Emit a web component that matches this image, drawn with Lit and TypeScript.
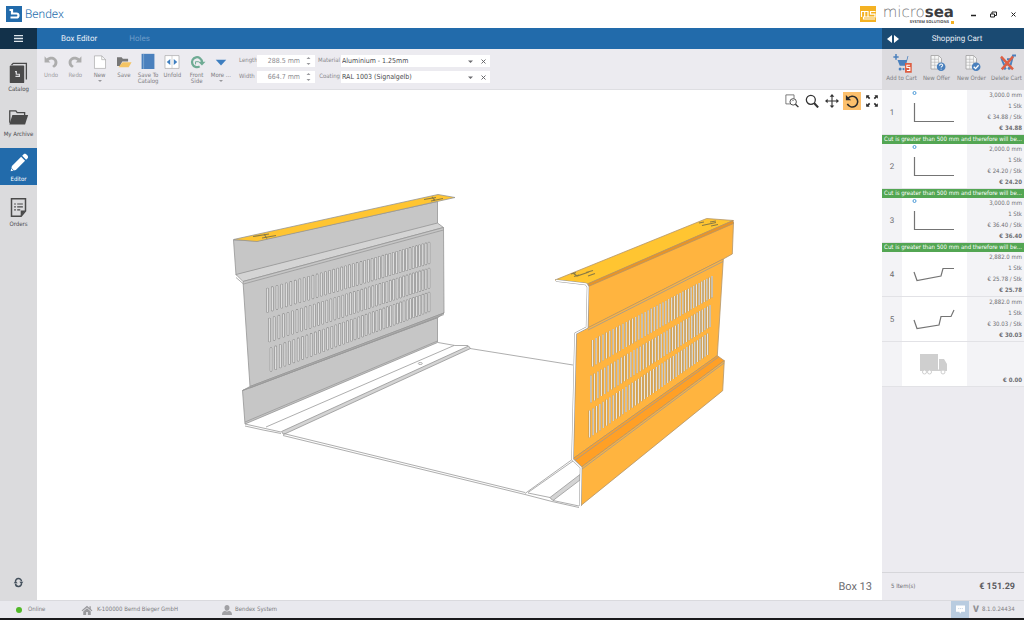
import { LitElement, html, svg, css, nothing } from "lit";
import { customElement, property, state } from "lit/decorators.js";
import { classMap } from "lit/directives/class-map.js";

const icons: Record<string, unknown> = {
  catalog: svg`<path d="M4 3.500 6 1.500H21V20" fill="none" stroke="#4a4a4a" stroke-width="1.500"/><rect x="2" y="4" width="16.500" height="20" rx="1" fill="#4a4a4a"/><path d="M8 11h1.500v3h3.500v2.500H8.500" fill="none" stroke="#dcdcde" stroke-width="1.400"/>`,
  archive: svg`<path d="M2 18V4.500h7l1.500 2H19V9" fill="none" stroke="#4a4a4a" stroke-width="1.5"/><path d="M5 9h18l-3.500 11H1.500z" fill="#4a4a4a"/>`,
  editor: svg`<path d="M3 22l1.500-6L15 5.500l4.500 4.500L9 20.500zM16.200 4.300l2-2c2-1.300 5.800 2.300 4.500 4.500l-2 2z" fill="#fff"/><path d="M3.800 18.500l2.700 2.700" stroke="#226bab" stroke-width="1"/>`,
  orders: svg`<path d="M4 2h16v14l-5 6H4z" fill="none" stroke="#4a4a4a" stroke-width="1.700"/><path d="M20 15.500h-5.500V22z" fill="#4a4a4a"/><path d="M7 8h2M10.500 8H17M7 11.300h2M10.500 11.300H17M7 14.600h2M10.500 14.600H14" stroke="#4a4a4a" stroke-width="1.400"/>`,
  undo: svg`<path d="M1 2v11h10L7.800 9.800C12 6 18 8 18 12.500c0 3-1.500 5-4 6.500l3 3c4-2 6.500-5.500 6-10C22 3 11 0 4.500 6z" fill="#adadad"/>`,
  redo: svg`<path d="M23 2v11H13l3.200-3.200C12 6 6 8 6 12.500c0 3 1.500 5 4 6.500l-3 3C3 20 .5 16.500 1 12 2 3 13 0 19.500 6z" fill="#adadad"/>`,
  fresh: svg`<path d="M2.500 1.500h12.500l6.500 6.500v15H2.500z" fill="#fff" stroke="#9a9a9a"/><path d="M15 1.500v6.500h6.500" fill="none" stroke="#9a9a9a"/>`,
  save: svg`<path d="M0 4h8l2 2.500h9V11H9l-4 8H0z" fill="#777"/><path d="M9.500 12.500H25L20 21H2.500z" fill="#f4c464"/>`,
  book: svg`<path d="M1 -2h22v26H1z" fill="#4a80bd"/><path d="M4.500-2v26" stroke="#9dbfe0" stroke-width="1"/>`,
  unfold: svg`<path d="M0 1h24v22H0z" fill="#fff" stroke="#9a9a9a"/><path d="M12 1v22" stroke="#b8b8b8"/><path d="M9 7v10l-6-5zM15 7v10l6-5z" fill="#3f7fc0"/>`,
  front: svg`<path d="M20.500 12A8.500 8.500 0 1 0 16.500 19.500" fill="none" stroke="#6fab94" stroke-width="3.800"/><path d="M14 11.500H26.500L20.500 18z" fill="#6fab94"/><path d="M15 11.500H9.500v4.500" fill="none" stroke="#6fab94" stroke-width="1.700"/>`,
  more: svg`<path d="M3 8h18l-9 10z" fill="#3f7fc0"/>`,
  cart: svg`<path d="M24 2.500h-3.500L17 15.500H9L6 8h12l1.500-5.500z" fill="#4a80bd"/><path d="M4 0v7.500M.5 4h7" stroke="#4a80bd" stroke-width="2"/><circle cx="9.500" cy="20" r="2" fill="#4a80bd"/><circle cx="14" cy="20" r="1.500" fill="#4a80bd"/><path d="M16 12h9v13h-9z" fill="#de5f43"/><path d="M22.500 15h-4v3h4v4h-4" fill="none" stroke="#fff" stroke-width="1.400"/>`,
  offer: svg`<path d="M4 2h10l4 4v14H4z" fill="#f6f6f6" stroke="#9b9b9b"/><path d="M4 7h10M4 11h14M4 15h14M9 2v18M14 2v18" stroke="#b4b4b4" stroke-width=".8"/><circle cx="17.500" cy="17" r="5.800" fill="#4a80bd"/><path d="M15.500 15.500c0-3 4.500-2.500 4 0-.3 1-2 1.200-2 2.500M17.500 19.500v1.300" fill="none" stroke="#fff" stroke-width="1.400"/>`,
  order: svg`<path d="M4 2h10l4 4v14H4z" fill="#f6f6f6" stroke="#9b9b9b"/><path d="M4 7h10M4 11h14M4 15h14M9 2v18M14 2v18" stroke="#b4b4b4" stroke-width=".8"/><circle cx="17.500" cy="17" r="5.800" fill="#4a80bd"/><path d="M14.300 17l2.500 2.500 4-4.500" fill="none" stroke="#fff" stroke-width="1.800"/>`,
  remove: svg`<path d="M24 2h-4l-3 12H8L5 7h3M12 7h5" fill="none" stroke="#4a80bd" stroke-width="2.500"/><circle cx="9" cy="19" r="2" fill="#4a80bd"/><circle cx="15" cy="19" r="2" fill="#4a80bd"/><path d="M4 3.500l16 17M20 3.500L5 20.500" stroke="#de5f43" stroke-width="3.200"/>`,
  zoomArea: svg`<path d="M9 17H1.500V1.500h14V8" fill="none" stroke="#555" stroke-width="1.300"/><circle cx="14" cy="13.500" r="5.500" fill="#fff" stroke="#444" stroke-width="1.600"/><path d="M18 17.500l5 5" stroke="#333" stroke-width="2.400"/><path d="M11.500 12.500c.8-1.500 2.500-2 4-1" fill="none" stroke="#555"/>`,
  zoom: svg`<circle cx="10" cy="10" r="7.700" fill="none" stroke="#333" stroke-width="2.200"/><path d="M15.500 15.500l7 7.500" stroke="#333" stroke-width="3.600"/>`,
  pan: svg`<path d="M12 3v18M3 12h18" stroke="#333" stroke-width="1.900"/><path d="M12 0l4 4.500H8zM12 24l4-4.500H8zM0 12l4.500-4v8zM24 12l-4.500-4v8z" fill="#333"/>`,
  rotate: svg`<path d="M5 7.500A9.300 9.300 0 1 1 4 17" fill="none" stroke="#2b2b2b" stroke-width="2.600"/><path d="M1.500 1.500v9h9z" fill="#2b2b2b"/>`,
  fit: svg`<path d="M2 2h6L6.200 4 9 7 7 9 4 6 2 8zM22 2v6L20 6 17 9l-2-2 2.800-3L16 2zM2 22v-6l2 2L7 15l2 2-2.800 3L8 22zM22 22h-6l1.800-2L15 17l2-2 3 3 2-2z" fill="#2b2b2b"/>`,
  sync: svg`<path d="M4 10a8 8 0 0 1 16-1M20 14a8 8 0 0 1-16 1" fill="none" stroke="#44505c" stroke-width="4"/><path d="M-1 14l5-6 6 6zM25 10l-5 6-6-6z" fill="#44505c"/>`,
  home: svg`<path d="M12 2L-1 13l2 2L12 6 23 15l2-2-4-3.500V3h-3v4zM12 8L3 15.500V24h7v-7h4v7h7v-8.500z" fill="#98989c"/>`,
  user: svg`<path d="M12 0c3.500 0 6 2.500 6 6.500S15.500 14 12 14 6 11 6 6.500 8.500 0 12 0zM0 24c0-7 3-9 7-10 3 2 7 2 10 0 4 1 7 3 7 10z" fill="#a0a0a4"/>`,
  chat: svg`<path d="M0 1h24v17H14l-3 5-2-5H0z" fill="#fff"/><path d="M5.500 9.500h3M10.500 9.500h3M15.500 9.500h3" stroke="#b9cce0" stroke-width="2"/>`,
};

const glyph = (name: string, cls = "icon") =>
  html`<svg class=${cls} viewBox="0 0 24 24" aria-hidden="true">${icons[name]}</svg>`;

type Pt = [number, number];
type SlotRow = { left: [number, number, number]; right: [number, number, number] };

/* Ventilation slots, foreshortened toward the far end of the side panel. */
function slotPath(rows: SlotRow[], count: number, depth: number): string {
  let d = "";
  for (const { left, right } of rows) {
    for (let i = 0; i < count; i++) {
      const t = i / (count - 1);
      const s = t / (t + (1 - t) * depth);
      const at = (k: number) => (left[k] + (right[k] - left[k]) * s).toFixed(1);
      d += `M${at(0)} ${at(1)}V${at(2)}`;
    }
  }
  return d;
}
const poly = (pts: Pt[], fill: string) =>
  svg`<polygon points=${pts.map((p) => p.join(",")).join(" ")} fill=${fill}></polygon>`;

@customElement("box-model")
class BoxModel extends LitElement {
  static styles = css`
    :host { display: block; }
    svg { display: block; width: 100%; height: 100%; }
    .faces polygon { stroke: #969696; stroke-width: 0.8; stroke-linejoin: round; }
    .warm polygon { stroke: #b3946a; }
    .line { fill: none; stroke: #999; stroke-width: 0.8; }
    .edge { fill: none; stroke: #999; stroke-width: 2.4; stroke-linejoin: round; }
    .edge-in { fill: none; stroke: #fff; stroke-width: 1.4; stroke-linejoin: round; }
    .slot-rim { fill: none; stroke: #8e8e8e; stroke-linecap: round; stroke-width: 2.6; }
    .slot-gap { fill: none; stroke: #dedede; stroke-linecap: round; stroke-width: 1.4; }
    .slot-dark { fill: none; stroke: #97835f; stroke-width: 1.9; }
    .slot-light { fill: none; stroke: #e9e6e0; stroke-width: 1.2; }
    .mark { fill: none; stroke: #8b7b45; stroke-width: 1.2; }
  `;
  render() {
    const near = slotPath([
      { left: [592.6, 340, 366.6], right: [712, 276, 297.5] },
      { left: [591, 375.6, 402.6], right: [710, 305, 327] },
      { left: [589.6, 410.6, 437.6], right: [707.6, 333.5, 355] },
    ], 41, 0.85);
    const far = slotPath([
      { left: [267.5, 289, 311.5], right: [429, 243, 263] },
      { left: [269.5, 319, 341], right: [429, 269, 287.5] },
      { left: [271, 348.5, 370.5], right: [429, 293, 311] },
    ], 43, 0.8);
    const rim = "M556 280.500 586 284 588 287 587 327.500 575.500 333.500 572.500 459.500 581 467.500 580.300 506";
    return html`<svg viewBox="37 90 845 510" role="img" aria-label="Box 13">
      <path class="line" d="M470 348.500 573 365"/>
      <g class="faces">
        ${poly([[233.5, 240], [257, 241], [437.5, 201.5], [437.5, 224], [236, 275]], "#c6c6c6")}
        ${poly([[233.5, 239.5], [438, 194.5], [455, 197.5], [257, 241.5]], "#ffc531")}
        ${poly([[236, 274.5], [437.500, 223], [443.5, 227.5], [243, 281.5]], "#d4d4d4")}
        ${poly([[242.5, 390.5], [437.5, 317.5], [437.5, 342.5], [245, 424]], "#c6c6c6")}
        ${poly([[243, 281.5], [443.5, 227.5], [444, 313], [250, 386.5]], "#c6c6c6")}
        ${poly([[242.5, 390.5], [250, 386.5], [444, 313], [438, 317.5]], "#b4b4b4")}
        ${poly([[281.5, 431.5], [468.5, 346], [470.5, 348.5], [283.5, 434.5]], "#d4d4d4")}
      </g>
      <path class="line" d="M236 277.500 243.500 284 443.500 230M245 422 437.500 341M250 388 444 314.500"/>
      <path class="line" d="M438 342.500 455 345.500 468 345.500M266 427 454 345.500"/>
      <path class="line" d="M245 424 263 428 281 432M245 426 263 430 281 433.500M283.500 433.500 525 492.500M283 435.500 525 494.500 552 501.500 579 507.500"/>
      <ellipse class="line" cx="420.300" cy="363.500" rx="2" ry="1"/>
      <path class="slot-rim" d=${far}/><path class="slot-gap" d=${far}/>
      <path class="mark" d="M253 236.500 269 234M262 238 276 235.500M264 234 267 238.500M424 199.500 436 197.500M431 201 443 198.500M432 197 435 200.500"/>
      <path class="line" d="M525 493.500 571.500 460M528 492.500 573 461M528 493 550 497.500 553 500.500 579 506"/>
      ${svg`<polygon points="550,497.500 580,474.500 580,480 553,500.500" fill="#d4d4d4" stroke="#999" stroke-width=".8"></polygon>`}
      <g class="faces warm">
        ${poly([[588.3, 285], [733.5, 222.5], [732.3, 254], [723.3, 259], [588.3, 328]], "#ffb43f")}
        ${poly([[555, 280], [706.7, 218.5], [733.5, 220.5], [588.3, 284]], "#ffc531")}
        ${poly([[588.3, 283.5], [733, 220.5], [733.500, 223.5], [588.3, 286.5]], "#e89428")}
        ${poly([[576.5, 333.5], [588.3, 327.5], [723.3, 259], [717.3, 355.7], [573.3, 458.5]], "#ffb43f")}
        ${poly([[573.3, 458.5], [717.3, 355.7], [724.3, 360.7], [581.7, 467]], "#ffa026")}
        ${poly([[581.7, 467], [724.3, 360.7], [722.7, 390.7], [580.7, 505.7]], "#ffb43f")}
      </g>
      <path class="line" d="M588 330 723 261.500M574 461 718.500 357M582 469 724 363"/>
      <path class="edge" d=${rim}/><path class="edge-in" d=${rim}/>
      <path class="slot-dark" d=${near}/><path class="slot-light" d=${near}/>
      <path class="mark" d="M571 274 576 272.500M574 276.500 579 275M573 273 577 276 589 272M586 272.500 593 270.500M588 276 595 273.500M699 223 704 222M702 225.500 716 222.500M710 222 716 221M711 226 718 224.500"/>
    </svg>`;
  }
}

@customElement("tool-button")
class ToolButton extends LitElement {
  @property() icon = "";
  @property() label = "";
  @property({ type: Boolean }) menu = false;
  @property({ type: Boolean }) muted = false;
  @property({ type: Boolean }) large = false;
  static styles = css`
    :host { display: block; }
    button {
      width: 100%; padding: 0; border: 0; background: none; color: #7e7e82;
      display: flex; flex-direction: column; align-items: center; gap: 4px;
      font: 6px/6px "DejaVu Sans Condensed", "DejaVu Sans", sans-serif; text-rendering: geometricPrecision;
    }
    .muted { color: #9c9ca0; }
    .icon { width: 14px; height: 14px; overflow: visible; }
    .large .icon { width: 18px; height: 18px; }
    .text { display: block; }
    .caret { display: block; width: 0; margin: 1px auto 0; border: 2px solid transparent; border-top-color: #9a9a9e; border-bottom: 0; }
  `;
  render() {
    return html`<button type="button" class=${classMap({ muted: this.muted, large: this.large })}>
      ${glyph(this.icon)}<span class="text">${this.label}${this.menu ? html`<span class="caret"></span>` : nothing}</span>
    </button>`;
  }
}

const profiles = {
  corner: svg`<path d="M12.500 13V31.500H52"/><circle class="origin" cx="12.500" cy="3" r="1.500"/>`,
  tray: svg`<path d="M12 20 15 28.500 39 24 41 16.500H52"/>`,
  step: svg`<path d="M12 23 15 31.500 37 28 39 19.500H49L52 13"/>`,
};
interface CartItem { profile: keyof typeof profiles; cut: string; price: string; total: string; warn?: boolean }

@customElement("shopping-cart")
class ShoppingCart extends LitElement {
  @state() items: CartItem[] = [
    { profile: "corner", cut: "3,000.0 mm", price: "€ 34.88 / Stk", total: "€ 34.88", warn: true },
    { profile: "corner", cut: "2,000.0 mm", price: "€ 24.20 / Stk", total: "€ 24.20", warn: true },
    { profile: "corner", cut: "3,000.0 mm", price: "€ 36.40 / Stk", total: "€ 36.40", warn: true },
    { profile: "tray", cut: "2,882.0 mm", price: "€ 25.78 / Stk", total: "€ 25.78" },
    { profile: "step", cut: "2,882.0 mm", price: "€ 30.03 / Stk", total: "€ 30.03" },
  ];
  static styles = css`
    :host { display: flex; flex-direction: column; background: #ecebf0; color: #6d6d71; font: 6px/11px "DejaVu Sans Condensed", "DejaVu Sans", sans-serif; text-rendering: geometricPrecision; }
    .head { height: 21px; background: #1a4a72; color: #e4ebf2; display: grid; grid-template-columns: 20px 1fr 20px; align-items: center; }
    .head h2 { margin: 0; padding-left: 8px; font: 8px/21px Roboto, sans-serif; text-align: center; white-space: nowrap; }
    .toggle { padding: 0 0 0 5px; border: 0; background: none; display: flex; }
    .toggle svg { width: 12px; height: 8px; }
    .tools { height: 36px; padding: 5px 0 0 2px; background: #dcdbdf; display: grid; grid-template-columns: repeat(4, 1fr); }
    .tools tool-button { white-space: nowrap; }
    ol { list-style: none; margin: 0; padding: 0; flex: 1; }
    .row { display: grid; grid-template-columns: 20px 65px 1fr; height: 44px; border-bottom: 1px solid #e2e2e6; background: #f3f3f6; }
    .number { align-self: center; text-align: center; font: 8px/11px Roboto, sans-serif; }
    .sketch { background: #fff; display: block; width: 65px; height: 44px; }
    .sketch path { fill: none; stroke: #747474; stroke-width: 1.2; }
    .sketch .truck path { fill: #cfcfcf; stroke: none; }
    .sketch .truck circle { fill: #fff; stroke: #cfcfcf; }
    .sketch .origin { fill: none; stroke: #4c9ad8; stroke-width: 1; }
    .values { padding-right: 2px; text-align: right; white-space: nowrap; }
    .values span, .values b { display: block; }
    .values b { font-weight: 700; }
    .last { align-self: end; }
    .warn { background: #53a653; color: #fff; font-size: 6px; line-height: 9px; text-align: center; white-space: nowrap; }
    .sum { height: 27px; border-top: 1px solid #d6d6da; padding: 0 9px; display: flex; align-items: center; justify-content: space-between; }
    .sum b { font: 700 9px/12px Roboto, sans-serif; color: #5c5c60; }
  `;
  render() {
    return html`
      <div class="head">
        <button class="toggle" type="button" aria-label="Resize cart"><svg viewBox="0 0 12 8"><path d="M5 0v8L0 4zM7 0v8l5-4z" fill="#fff"/></svg></button>
        <h2>Shopping Cart</h2>
      </div>
      <div class="tools">
        <tool-button large icon="cart" label="Add to Cart"></tool-button>
        <tool-button large icon="offer" label="New Offer"></tool-button>
        <tool-button large icon="order" label="New Order"></tool-button>
        <tool-button large icon="remove" label="Delete Cart"></tool-button>
      </div>
      <ol>
        ${this.items.map((item, i) => html`<li>
          <div class="row">
            <span class="number">${i + 1}</span>
            <svg class="sketch" viewBox="0 0 65 44">${profiles[item.profile]}</svg>
            <div class="values"><span>${item.cut}</span><span>1 Stk</span><span>${item.price}</span><b>${item.total}</b></div>
          </div>
          ${item.warn ? html`<div class="warn">Cut is greater than 500 mm and therefore will be...</div>` : nothing}
        </li>`)}
        <li class="row">
          <span></span>
          <svg class="sketch" viewBox="0 0 65 44"><g class="truck"><path d="M18 12h18v16H18zM37 17h5l3 5v7H18v-1.500h19z"/><circle cx="22.500" cy="30" r="2"/><circle cx="27.500" cy="30" r="2"/><circle cx="41" cy="30" r="2"/></g></svg>
          <div class="values last"><b>€ 0.00</b></div>
        </li>
      </ol>
      <div class="sum"><span>5 Item(s)</span><b>€ 151.29</b></div>`;
  }
}

@customElement("app-root")
class AppRoot extends LitElement {
  @state() section = "Editor";
  static styles = css`
    :host { display: flex; flex-direction: column; min-height: 100vh; background: #fff; color: #6d6d71; font: 6px/8px "DejaVu Sans Condensed", "DejaVu Sans", sans-serif; text-rendering: geometricPrecision; }
    * { box-sizing: border-box; }
    button, input, select { font: inherit; color: inherit; text-rendering: inherit; }
    button { border: 0; background: none; padding: 0; }
    header { height: 28px; display: flex; align-items: center; padding: 0 6px; }
    .brand { display: flex; align-items: center; gap: 3px; margin: 0; font: 300 12px/18px Roboto, sans-serif; color: #226bab; }
    .brand svg { width: 16px; height: 16px; }
    .partner { margin-left: auto; display: flex; align-items: center; gap: 4px; color: #77777b; }
    .partner svg { width: 16px; height: 16px; }
    .partner-name { display: flex; flex-direction: column; align-items: flex-end; width: 74px; }
    .wordmark { font: 200 15px/16px "DejaVu Sans", sans-serif; white-space: nowrap; }
    .wordmark b { font-weight: 700; color: #3c3c40; }
    .claim { display: flex; align-items: center; gap: 2px; font: 700 4px/5px "Open Sans", sans-serif; color: #4c4c50; white-space: nowrap; }
    .claim i { width: 3px; height: 3px; background: #f4b223; }
    .window { display: flex; gap: 11px; margin-left: 15px; }
    .window svg { display: block; width: 9px; height: 9px; }
    .main { flex: 1; display: grid; grid-template-columns: 37px 1fr 142px; }
    aside { background: #dbdbdd; display: flex; flex-direction: column; }
    .burger { height: 21px; background: #12314a; display: grid; place-items: center; }
    .burger svg { width: 9px; height: 7px; display: block; }
    nav { display: grid; gap: 8px; padding-top: 9px; }
    .nav-item { height: 37px; padding-top: 4px; display: flex; flex-direction: column; align-items: center; gap: 3px; color: #4a4a4e; font-size: 6px; line-height: 8px; }
    .nav-item svg { width: 21px; height: 21px; flex: none; }
    .active { background: #226bab; color: #fff; }
    .sync { margin: auto auto 13px; }
    .sync svg { width: 9px; height: 9px; display: block; overflow: visible; }
    .center { display: flex; flex-direction: column; min-width: 0; }
    .tabs { height: 21px; background: #226bab; display: flex; gap: 32px; padding-left: 24px; }
    .tabs a { color: #e8f0f8; font: 8px/21px Roboto, sans-serif; text-decoration: none; white-space: nowrap; }
    .tabs .off { color: #6f9cc8; }
    .toolbar { height: 41px; background: #ecebf0; border-bottom: 1px solid #dedee2; padding: 6px 0 0 2px; display: flex; }
    .actions { display: grid; grid-template-columns: repeat(8, 1fr); width: 194px; }
    .fields { display: grid; grid-template-columns: 17px 58px 24px 149px; grid-auto-rows: 12px; gap: 4px 1px; align-items: center; padding-left: 6px; }
    .fields label { color: #88888c; white-space: nowrap; }
    .fields .second { justify-self: end; }
    .spin, .pick { height: 12px; background: #fff; display: flex; align-items: center; }
    .spin { color: #8c8c90; }
    .spin input { width: 43px; height: 12px; border: 0; padding: 0; text-align: right; background: none; font: 7px/12px "DejaVu Sans Condensed", "DejaVu Sans", sans-serif; }
    .spin svg { width: 5px; height: 8px; margin-left: 6px; }
    .pick select { appearance: none; flex: 1; min-width: 0; height: 12px; border: 0; padding: 0 0 0 1px; background: none; color: #4c4c50; font: 7px/12px "DejaVu Sans Condensed", "DejaVu Sans", sans-serif; }
    .pick svg { width: 5px; height: 5px; display: block; }
    .pick button { margin: 0 4px 0 8px; }
    .stage { position: relative; flex: 1; display: grid; }
    .view-tools { position: absolute; top: 2px; right: 1px; display: flex; gap: 2px; }
    .view-tools button { width: 18px; height: 18px; display: grid; place-items: center; }
    .view-tools svg { width: 14px; height: 14px; display: block; }
    .view-tools .on { background: #fdc06c; }
    .name { position: absolute; right: 10px; bottom: 6px; margin: 0; font: 11px/14px Roboto, sans-serif; color: #6a6a6e; }
    footer { height: 20px; background: #e9e9ee; border-top: 1px solid #dadade; border-bottom: 2px solid #1a1a1c; display: flex; align-items: center; color: #7c7c80; white-space: nowrap; }
    .cell { display: flex; align-items: center; gap: 5px; }
    .online { width: 66px; margin-left: 16px; gap: 6px; }
    .dot { width: 6px; height: 6px; border-radius: 50%; background: #50b828; }
    .cell svg { width: 10px; height: 10px; overflow: visible; }
    .company { width: 140px; }
    .cell:nth-child(3) { gap: 3px; }
    .chat { margin-left: auto; width: 18px; height: 17px; background: #b9cce0; display: grid; place-items: center; }
    .chat svg { width: 9px; height: 9px; display: block; }
    .version { width: 55px; padding-left: 4px; display: flex; align-items: center; gap: 3px; }
    .version b { font: 900 9px/10px Roboto, sans-serif; color: #8f8f93; }
  `;
  navItem(icon: string, label: string) {
    return html`<button type="button" class=${classMap({ "nav-item": true, active: this.section === label })} @click=${() => (this.section = label)}>${glyph(icon)}${label}</button>`;
  }
  spin(id: string, value: string) {
    return html`<div class="spin"><input id=${id} .value=${value}><svg viewBox="0 0 5 8" aria-hidden="true"><path d="M.5 2h4l-2-2zM.5 6h4l-2 2z" fill="#98989c"/></svg></div>`;
  }
  pick(id: string, value: string) {
    return html`<div class="pick"><select id=${id}><option>${value}</option></select>
      <svg viewBox="0 0 5 5" aria-hidden="true"><path d="M0 1.500h5L2.500 4z" fill="#6c6c70"/></svg>
      <button type="button" aria-label="Clear"><svg viewBox="0 0 5 5"><path d="M.5.5l4 4M4.500.5l-4 4" stroke="#5c5c60" stroke-width=".9"/></svg></button></div>`;
  }
  render() {
    return html`
      <header>
        <h1 class="brand"><svg viewBox="0 0 16 16" aria-hidden="true"><path d="M0 0h16v16H0z" fill="#226bab"/><path d="M3.500 4H6v3.500h4.500q2 0 2 2t-2 2H4.500" fill="none" stroke="#fff" stroke-width="2.200"/></svg>Bendex</h1>
        <div class="partner">
          <svg viewBox="0 0 16 16" aria-hidden="true"><path d="M0 0h16v16H0z" fill="#f4b223"/><path d="M1.500 11V5.500h6.500V11M4.700 5.500V11M15.500 5.500H10.500v2.700h4.500V11H3.500v2H15" fill="none" stroke="#fff" stroke-width="1.200"/></svg>
          <div class="partner-name"><span class="wordmark">micro<b>sea</b></span><span class="claim">SYSTEM SOLUTIONS<i></i></span></div>
        </div>
        <div class="window">
          <button type="button" aria-label="Minimize"><svg viewBox="0 0 9 9"><path d="M2 5.500h5" stroke="#222" stroke-width="1.500"/></svg></button>
          <button type="button" aria-label="Restore"><svg viewBox="0 0 9 9"><path d="M1.500 4h4v3h-4zM3 4V2h4.500v3.500h-2" fill="none" stroke="#222"/></svg></button>
          <button type="button" aria-label="Close"><svg viewBox="0 0 9 9"><path d="M2.500 2.500l4 4M6.500 2.500l-4 4" stroke="#222"/></svg></button>
        </div>
      </header>
      <div class="main">
        <aside>
          <button class="burger" type="button" aria-label="Menu"><svg viewBox="0 0 9 7"><path d="M0 .7h9M0 3.500h9M0 6.300h9" stroke="#dfe6ec" stroke-width="1.300"/></svg></button>
          <nav>${this.navItem("catalog", "Catalog")}${this.navItem("archive", "My Archive")}${this.navItem("editor", "Editor")}${this.navItem("orders", "Orders")}</nav>
          <button class="sync" type="button" aria-label="Synchronize">${glyph("sync")}</button>
        </aside>
        <div class="center">
          <div class="tabs"><a href="#box">Box Editor</a><a class="off" href="#holes">Holes</a></div>
          <div class="toolbar">
            <div class="actions">
              <tool-button icon="undo" label="Undo" muted></tool-button>
              <tool-button icon="redo" label="Redo" muted></tool-button>
              <tool-button icon="fresh" label="New" menu></tool-button>
              <tool-button icon="save" label="Save"></tool-button>
              <tool-button icon="book" label="Save To Catalog"></tool-button>
              <tool-button icon="unfold" label="Unfold"></tool-button>
              <tool-button icon="front" label="Front Side"></tool-button>
              <tool-button icon="more" label="More ..." menu></tool-button>
            </div>
            <div class="fields">
              <label for="length">Length</label>${this.spin("length", "288.5 mm")}
              <label class="second" for="material">Material</label>${this.pick("material", "Aluminium - 1.25mm")}
              <label for="width">Width</label>${this.spin("width", "664.7 mm")}
              <label class="second" for="coating">Coating</label>${this.pick("coating", "RAL 1003 (Signalgelb)")}
            </div>
          </div>
          <div class="stage">
            <box-model></box-model>
            <div class="view-tools">
              <button type="button" aria-label="Zoom to area">${glyph("zoomArea")}</button>
              <button type="button" aria-label="Zoom">${glyph("zoom")}</button>
              <button type="button" aria-label="Pan">${glyph("pan")}</button>
              <button type="button" class="on" aria-label="Rotate">${glyph("rotate")}</button>
              <button type="button" aria-label="Fit to screen">${glyph("fit")}</button>
            </div>
            <p class="name">Box 13</p>
          </div>
        </div>
        <shopping-cart></shopping-cart>
      </div>
      <footer>
        <div class="cell online"><span class="dot"></span>Online</div>
        <div class="cell company">${glyph("home")}K-100000 Bernd Bieger GmbH</div>
        <div class="cell">${glyph("user")}Bendex System</div>
        <button class="chat" type="button" aria-label="Messages">${glyph("chat")}</button>
        <div class="version"><b>V</b>8.1.0.24434</div>
      </footer>`;
  }
}
